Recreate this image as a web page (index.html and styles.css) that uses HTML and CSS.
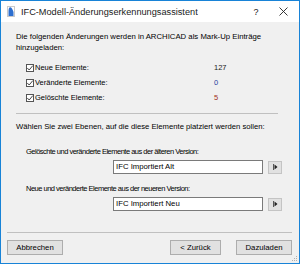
FILE: index.html
```html
<!DOCTYPE html>
<html lang="de">
<head>
    <meta charset="UTF-8">
    <meta name="viewport" content="width=device-width, initial-scale=1.0">
    <title>IFC-Modell-Änderungserkennungsassistent</title>
    <link rel="stylesheet" href="styles.css">
</head>
<body>
    <div class="window">
        <div class="titlebar">
            <svg class="app-icon" width="8" height="11" viewBox="0 0 8 11">
                <rect x="0.5" y="0.5" width="7" height="10" fill="#fff" stroke="#c9c9c9"/>
                <path d="M1.5 10 L1.5 5 Q1.5 1.2 3.2 1.2 Q5 1.2 6.5 6 L6.5 10 Z" fill="#2d6fcf"/>
            </svg>
            <span class="title">IFC-Modell-Änderungserkennungsassistent</span>
            <span class="help">?</span>
            <svg class="close" width="9" height="9" viewBox="0 0 9 9">
                <path d="M0.5 0.5 L8.5 8.5 M8.5 0.5 L0.5 8.5" stroke="#222" stroke-width="0.9"/>
            </svg>
        </div>

        <div class="content">
            <p class="intro">Die folgenden Änderungen werden in ARCHICAD als Mark-Up Einträge<br>hinzugeladen:</p>

            <ul class="checks">
                <li class="check-row">
                    <span class="box"><svg width="8" height="8" viewBox="0 0 8 8"><path d="M1.3 4 L3.2 6 L6.8 1.6" fill="none" stroke="#444" stroke-width="1"/></svg></span>
                    <span class="check-label">Neue Elemente:</span>
                    <span class="count">127</span>
                </li>
                <li class="check-row">
                    <span class="box"><svg width="8" height="8" viewBox="0 0 8 8"><path d="M1.3 4 L3.2 6 L6.8 1.6" fill="none" stroke="#444" stroke-width="1"/></svg></span>
                    <span class="check-label">Veränderte Elemente:</span>
                    <span class="count count-blue">0</span>
                </li>
                <li class="check-row">
                    <span class="box"><svg width="8" height="8" viewBox="0 0 8 8"><path d="M1.3 4 L3.2 6 L6.8 1.6" fill="none" stroke="#444" stroke-width="1"/></svg></span>
                    <span class="check-label">Gelöschte Elemente:</span>
                    <span class="count count-red">5</span>
                </li>
            </ul>

            <hr class="sep">

            <p class="prompt">Wählen Sie zwei Ebenen, auf die diese Elemente platziert werden sollen:</p>

            <div class="layer-group">
                <p class="layer-label">Gelöschte und veränderte Elemente aus der älteren Version:</p>
                <div class="layer-row">
                    <div class="layer-field">IFC Importiert Alt</div>
                    <button class="pick"><svg width="5" height="6" viewBox="0 0 5 6"><rect x="0" y="0" width="1" height="6" fill="#555"/><path d="M1.5 0.5 L4.5 3 L1.5 5.5 Z" fill="#222"/></svg></button>
                </div>
            </div>

            <div class="layer-group layer-group-2">
                <p class="layer-label">Neue und veränderte Elemente aus der neueren Version:</p>
                <div class="layer-row">
                    <div class="layer-field">IFC Importiert Neu</div>
                    <button class="pick"><svg width="5" height="6" viewBox="0 0 5 6"><rect x="0" y="0" width="1" height="6" fill="#555"/><path d="M1.5 0.5 L4.5 3 L1.5 5.5 Z" fill="#222"/></svg></button>
                </div>
            </div>
        </div>

        <div class="footer">
            <hr class="sep">
            <div class="buttons">
                <button class="btn">Abbrechen</button>
                <span class="spacer"></span>
                <button class="btn btn-back">&lt; Zurück</button>
                <button class="btn">Dazuladen</button>
            </div>
        </div>

        <svg class="grip" width="6" height="6" viewBox="0 0 6 6">
            <rect x="4" y="0" width="1" height="1" fill="#b0b0b0"/>
            <rect x="2" y="2" width="1" height="1" fill="#b0b0b0"/>
            <rect x="4" y="2" width="1" height="1" fill="#b0b0b0"/>
            <rect x="0" y="4" width="1" height="1" fill="#b0b0b0"/>
            <rect x="2" y="4" width="1" height="1" fill="#b0b0b0"/>
            <rect x="4" y="4" width="1" height="1" fill="#b0b0b0"/>
        </svg>
    </div>
</body>
</html>
```

FILE: styles.css
```css
* {
    margin: 0;
    padding: 0;
    box-sizing: border-box;
}

body {
    background: #f0f0f0;
    font-family: 'Liberation Sans', Arial, sans-serif;
    font-size: 7.5px;
    color: #000;
}

/* Dialog frame */
.window {
    position: relative;
    width: 300px;
    height: 264px;
    border: 1px solid #1883d7;
    background: #f0f0f0;
    display: flex;
    flex-direction: column;
}

.titlebar {
    height: 21px;
    background: #fff;
    display: flex;
    align-items: center;
    padding-left: 6px;
}

.app-icon {
    flex: none;
}

.title {
    margin-left: 6px;
    font-size: 9.2px;
    color: #1a1a1a;
    flex: 1;
}

.help {
    font-size: 9px;
    color: #222;
    width: 10px;
    text-align: center;
}

.close {
    margin-left: 18px;
    margin-right: 11px;
}

/* Main area */
.content {
    padding: 9px 15px 0 15px;
}

.intro {
    font-size: 7.75px;
    line-height: 11px;
}

.checks {
    list-style: none;
    margin-top: 7px;
    padding-left: 10px;
}

.check-row {
    display: flex;
    align-items: center;
    height: 15px;
}

.box {
    width: 8px;
    height: 8px;
    border: 1px solid #555;
    background: #fff;
    display: flex;
    align-items: center;
    justify-content: center;
    margin-right: 1px;
}

.box svg {
    flex: none;
}

.check-label {
    width: 179px;
}

.count {
    color: #222;
}

.count-blue {
    color: #1f3f9f;
}

.count-red {
    color: #a0301c;
}

.sep {
    border: none;
    height: 1px;
    background: #c0c0c0;
}

.content .sep {
    margin: 8px 6px 0 0;
}

.prompt {
    font-size: 7.7px;
    line-height: 11px;
    margin-top: 7px;
}

.layer-group {
    margin-top: 14px;
    padding-left: 10px;
}

.layer-group-2 {
    margin-top: 9px;
}

.layer-label {
    line-height: 11px;
    letter-spacing: -0.5px;
}

.layer-row {
    display: flex;
    align-items: center;
    margin-top: 3px;
    padding-left: 87px;
}

.layer-field {
    width: 150px;
    height: 14px;
    border: 1px solid #7a7a7a;
    background: #fff;
    font-size: 7.75px;
    line-height: 12px;
    padding-left: 2px;
}

.pick {
    width: 14px;
    height: 13px;
    margin-left: 5px;
    border: 1px solid #c4c4c4;
    background: #e1e1e1;
    display: flex;
    align-items: center;
    justify-content: center;
}

/* Bottom buttons */
.footer {
    margin-top: auto;
    padding: 0 7px 8px 6px;
}

.buttons {
    display: flex;
    margin-top: 7px;
}

.spacer {
    flex: 1;
}

.btn {
    width: 56px;
    height: 15px;
    border: 1px solid #adadad;
    background: #e1e1e1;
    font-family: 'Liberation Sans', Arial, sans-serif;
    font-size: 7.75px;
    color: #000;
}

.btn-back {
    width: 51px;
    margin-right: 15px;
}

.grip {
    position: absolute;
    right: 1px;
    bottom: 1px;
}
```
